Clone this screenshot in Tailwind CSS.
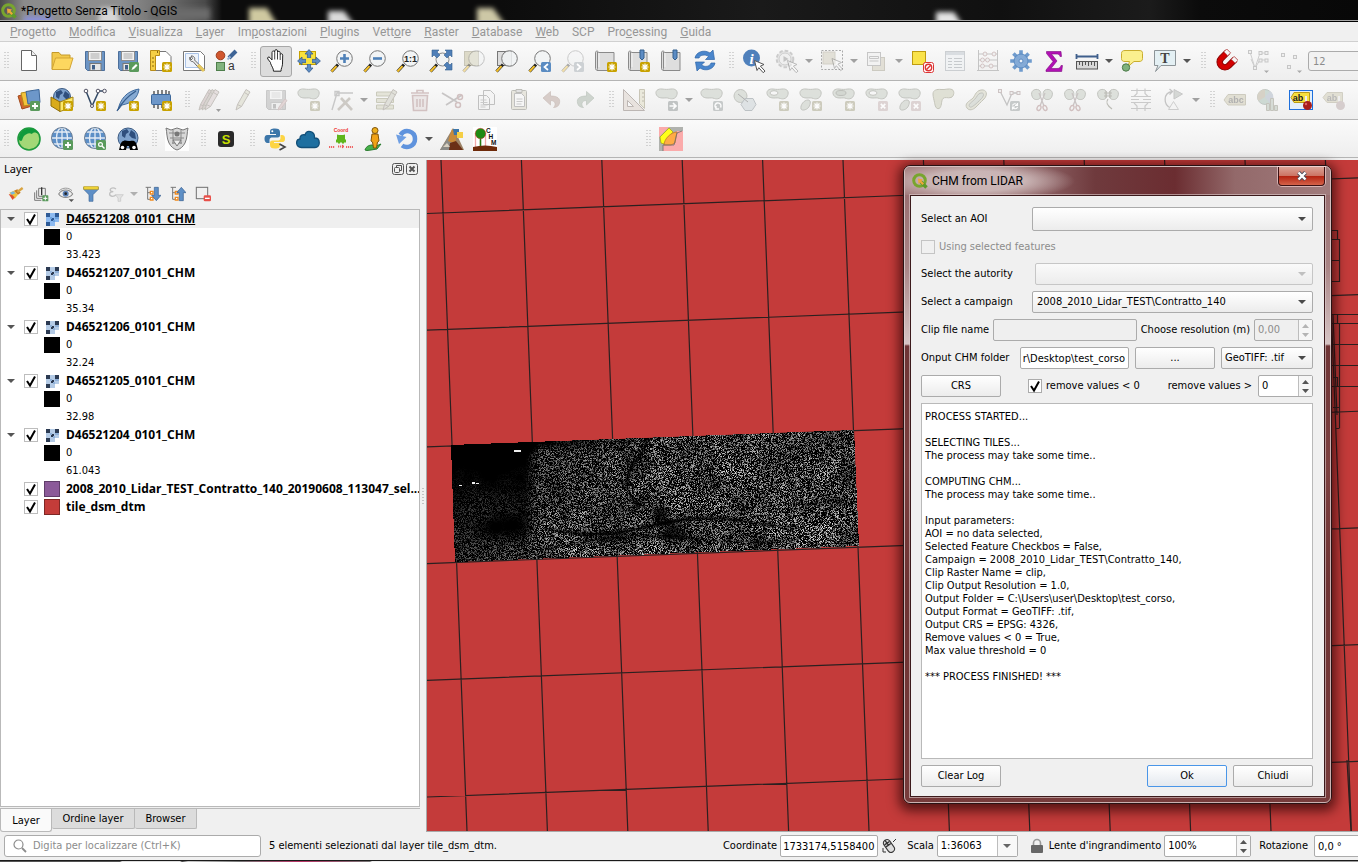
<!DOCTYPE html>
<html lang="it">
<head>
<meta charset="utf-8">
<title>*Progetto Senza Titolo - QGIS</title>
<script src="https://cdn.jsdelivr.net/npm/@tailwindcss/browser@4"></script>
</head>
<body class="h-screen flex flex-col overflow-hidden bg-[#f0f0f0] text-[11px] leading-[14px] text-black font-['DejaVu_Sans_Condensed','DejaVu_Sans',sans-serif]">

<!-- Window title -->
<header class="relative h-[22px] shrink-0 overflow-hidden bg-[linear-gradient(90deg,#4a4a4a_0px,#8b8b8b_24px,#8f8f8f_120px,#6e6e6e_165px,#4a4a4a_205px,#0c0c0c_222px,#0c0c0c_500px,#1a1a1a_760px,#101010_1000px,#1b1b1b_1150px,#0b0b0b_1200px,#080808_1358px)] border-b border-black">
  <svg class="absolute inset-0 w-full h-full" aria-hidden="true">
    <defs><filter id="soft" x="-50" y="-30" width="1500" height="90" filterUnits="userSpaceOnUse"><feGaussianBlur stdDeviation="2.500"/></filter></defs>
    <g filter="url(#soft)">
      <path d="M24 16h28v10H24z" fill="#8a90d8"/><path d="M100 8h16l6 18H98z" fill="#d6d6d6"/>
      <path d="M150 8h60v12h-60z" fill="#6a6a6a"/>
      <path d="M249 8h18l11 18h-29z" fill="#cfc9a0"/><path d="M328 11h16l11 15h-27z" fill="#dadada"/>
      <path d="M477 8h16l13 18h-29z" fill="#cdc8a6"/><path d="M936 12h18l9 14h-27z" fill="#e4e4e4"/>
    </g>
    <path d="M0 20.500h4000" stroke="#a8a8a8"/>
  </svg>
  <div class="relative flex items-center h-[21px] gap-1 pl-px">
    <svg class="w-4 h-4" viewBox="0 0 16 16" aria-hidden="true"><circle cx="7.500" cy="7.500" r="5.800" fill="none" stroke="#78a52e" stroke-width="3"/><path d="M8 8l6.500 6.500" stroke="#5f9a2a" stroke-width="3.500"/><path d="M6 5.500l5 1-1.500 1.500 2.500 2.500-1.500 1.500L8 9.500 6.500 11z" fill="#f0a63a"/></svg>
    <h1 class="font-['Roboto',sans-serif] text-xs text-black">*Progetto Senza Titolo - QGIS</h1>
  </div>
</header>

<!-- Menu bar -->
<nav id="menus" aria-label="Menu" class="flex items-center shrink-0 h-5 pl-[10px] gap-[13px] bg-[#f0f0f0] border-b border-[#d0d0d0] font-['Roboto',sans-serif] text-xs text-[#969696]">
  <button type="button"><u>P</u>rogetto</button><button type="button"><u>M</u>odifica</button><button type="button"><u>V</u>isualizza</button><button type="button"><u>L</u>ayer</button><button type="button">Im<u>p</u>ostazioni</button><button type="button"><u>P</u>lugins</button><button type="button">Vett<u>o</u>re</button><button type="button"><u>R</u>aster</button><button type="button"><u>D</u>atabase</button><button type="button"><u>W</u>eb</button><button type="button">SCP</button><button type="button">Pro<u>c</u>essing</button><button type="button"><u>G</u>uida</button>
</nav>

<!-- Tool bars, filled by the script -->
<div id="bar1" role="toolbar" aria-label="Progetto e navigazione" class="flex items-center shrink-0 h-[39px] overflow-hidden bg-linear-to-b from-[#fafafa] to-[#eeeeee] border-b border-[#b4b4b4]"></div>
<div id="bar2" role="toolbar" aria-label="Modifica" class="flex items-center shrink-0 h-[39px] overflow-hidden bg-linear-to-b from-[#fafafa] to-[#eeeeee] border-b border-[#b4b4b4]"></div>
<div id="bar3" role="toolbar" aria-label="Plugins" class="flex items-center shrink-0 h-[38px] overflow-hidden bg-linear-to-b from-[#fafafa] to-[#eeeeee] border-b border-[#b4b4b4]"></div>

<main class="relative flex flex-1 min-h-0 pt-[2px]">
  <!-- Layer dock -->
  <section class="flex flex-col w-[420px] shrink-0" aria-label="Layer">
    <div class="flex items-center h-[18px] pl-1 pr-[2px] gap-[2px] font-['Noto_Sans',sans-serif]">
      <h2 class="flex-1">Layer</h2>
      <button type="button" aria-label="Stacca"><svg class="w-3 h-3" viewBox="0 0 12 12" fill="none" stroke="#555"><rect x=".5" y=".5" width="11" height="11" rx="2"/><path d="M4.500 4.500v-2h5v5h-2"/><rect x="2.500" y="4.500" width="5" height="5" rx="1"/></svg></button>
      <button type="button" aria-label="Chiudi"><svg class="w-3 h-3" viewBox="0 0 12 12" fill="none" stroke="#555"><rect x=".5" y=".5" width="11" height="11" rx="2"/><path d="M3.500 3.500l5 5M8.500 3.500l-5 5" stroke-width="2"/></svg></button>
    </div>
    <div id="layerbar" role="toolbar" aria-label="Strumenti layer" class="flex items-center h-[31px] pl-[3px]"></div>
    <ul id="tree" class="flex-1 min-h-0 overflow-hidden bg-white border border-[#b9b9b9]"></ul>
    <div class="flex items-start h-6 mt-px border-t border-[#b9b9b9]" role="tablist">
      <button type="button" role="tab" aria-selected="true" class="h-[23px] w-[52px] pt-px bg-[#fafafa] border border-t-0 border-[#b9b9b9] rounded-b-[3px]">Layer</button>
      <button type="button" role="tab" class="h-5 w-[83px] bg-[#dcdcdc] border border-t-0 border-l-0 border-[#b9b9b9] rounded-b-[2px]">Ordine layer</button>
      <button type="button" role="tab" class="h-5 w-[62px] bg-[#dcdcdc] border border-t-0 border-l-0 border-[#b9b9b9] rounded-b-[2px]">Browser</button>
    </div>
  </section>

  <div class="w-[6px] shrink-0 flex items-center justify-center" role="separator"><svg class="w-[2px] h-4" viewBox="0 0 2 16" aria-hidden="true"><path d="M1 0v16" stroke="#b4b4b4" stroke-width="1.500" stroke-dasharray="1 2"/></svg></div>

  <!-- Map canvas -->
  <section class="relative flex-1 min-w-0 overflow-hidden bg-[#c43b3a] border-l border-b border-[#a9a9a9]" aria-label="Mappa">
    <svg id="grid" class="absolute inset-0 w-full h-full" fill="none" stroke="#2b2020" stroke-width="1.200" aria-hidden="true"></svg>
    <canvas id="chm" width="412" height="136" class="absolute left-[22px] top-[269px]"></canvas>
  </section>

  <!-- CHM from LIDAR dialog -->
  <form onsubmit="return false" aria-labelledby="dlgTitle" class="absolute right-[26px] top-[7px] w-[429px] rounded-[7px] border border-[#2a1214] shadow-[0_3px_12px_4px_rgba(30,0,0,0.65)] bg-[linear-gradient(180deg,#a88384_0px,#9a7072_30px,#a98485_100px,#d6c4c4_178px,#6e3435_180px,#7c4040_300px,#6e3333_420px,#773b3b_637px)]">
    <div class="rounded-[6px] border border-[#e0cfcf]/80 px-[5px] pb-[5px]">
      <div class="-mx-[5px] flex h-[28px] pl-[7px] rounded-t-[5px] bg-[radial-gradient(ellipse_100px_20px_at_70px_14px,#cdb9b9_0%,#c9b4b4_50%,transparent_100%),linear-gradient(90deg,#a07879_0px,#a07879_90px,#85575a_150px,#6f3a3d_190px,#6b2d31_270px,#93696a_330px,#a07b7c_420px)]">
        <div class="flex items-center gap-1">
          <svg class="w-4 h-4" viewBox="0 0 16 16" aria-hidden="true"><circle cx="7.500" cy="7.500" r="5.800" fill="none" stroke="#78a52e" stroke-width="3"/><path d="M8 8l6.500 6.500" stroke="#5f9a2a" stroke-width="3.500"/><path d="M6 5.500l5 1-1.500 1.500 2.500 2.500-1.500 1.500L8 9.500 6.500 11z" fill="#f0a63a"/></svg>
          <h2 id="dlgTitle" class="font-['Roboto',sans-serif] text-xs">CHM from LIDAR</h2>
        </div>
        <button type="button" aria-label="Chiudi finestra" class="ml-auto mr-[5px] w-[47px] h-[19px] grid place-items-center rounded-b-[4px] border border-t-0 border-[#3b1113] shadow-[0_0_0_1px_rgba(255,220,220,0.6)] bg-[linear-gradient(180deg,#dba296_0%,#cc7464_48%,#b3210f_50%,#d5634a_100%)]">
          <svg class="w-3 h-3" viewBox="0 0 12 12"><path d="M2.500 2.500l7 7M9.500 2.500l-7 7" stroke="#4a4a5a" stroke-width="4"/><path d="M2.500 2.500l7 7M9.500 2.500l-7 7" stroke="#fff" stroke-width="2.400"/></svg>
        </button>
      </div>
      <div class="border border-[#3c1a1c] outline outline-[#e0cfcf]/60 bg-[#f0f0f0] flex flex-col gap-[6px] pl-[10px] pr-[11px] pt-[11px] pb-[9px]">
        <div class="flex items-center">
          <label for="aoi" class="w-[111px]">Select an AOI</label>
          <span class="combo relative flex-1"><select id="aoi" class="appearance-none block w-full h-6 px-1 rounded-[2px] border border-[#ababab] bg-linear-to-b from-white to-[#ececec]"><option></option></select></span>
        </div>
        <div class="flex items-center h-5 gap-1 text-[#8c8c8c]">
          <input id="sel" type="checkbox" disabled class="appearance-none w-[14px] h-[14px] border border-[#c4c4c4] bg-[#f0f0f0]"><label for="sel">Using selected features</label>
        </div>
        <div class="flex items-center">
          <label for="aut" class="w-[114px]">Select the autority</label>
          <span class="combo relative flex-1 text-[#a9a9a9]"><select id="aut" disabled class="appearance-none block w-full h-[22px] px-1 rounded-[2px] border border-[#c6c6c6] bg-linear-to-b from-[#fafafa] to-[#ececec]"><option></option></select></span>
        </div>
        <div class="flex items-center">
          <label for="camp" class="w-[111px]">Select a campaign</label>
          <span class="combo relative flex-1"><select id="camp" class="appearance-none block w-full h-[22px] px-1 rounded-[2px] border border-[#ababab] bg-linear-to-b from-white to-[#ececec]"><option>2008_2010_Lidar_TEST\Contratto_140</option></select></span>
        </div>
        <div class="flex items-center gap-1">
          <label for="clip">Clip file name</label>
          <input id="clip" type="text" class="flex-1 min-w-0 h-[22px] px-1 rounded-[2px] border border-[#ababab] bg-[#efefef]">
          <label for="res">Choose resolution (m)</label>
          <span class="flex w-[59px] h-[22px] rounded-[2px] border border-[#ababab] bg-[#efefef]"><input id="res" type="text" value="0,00" disabled class="flex-1 min-w-0 px-[3px] text-[#8c8c8c]"><span class="spin spinoff w-[14px] border-l border-[#bdbdbd] bg-[#f6f6f6] text-[#b4b4b4]"></span></span>
        </div>
        <div class="flex items-center gap-[6px]">
          <label for="out" class="flex-1">Onput CHM folder</label>
          <input id="out" type="text" value="r\Desktop\test_corso" class="w-[109px] h-[22px] pr-[3px] text-right rounded-[2px] border border-[#ababab] bg-white">
          <button type="button" class="w-20 h-[22px] rounded-[2px] border border-[#ababab] bg-linear-to-b from-white to-[#ececec]">...</button>
          <span class="combo relative w-[92px]"><select aria-label="Formato" class="appearance-none block w-full h-[22px] px-[3px] rounded-[2px] border border-[#ababab] bg-linear-to-b from-white to-[#ececec]"><option>GeoTIFF: .tif</option></select></span>
        </div>
        <div class="flex items-center">
          <button type="button" class="w-20 h-[22px] rounded-[2px] border border-[#ababab] bg-linear-to-b from-white to-[#ececec]">CRS</button>
          <span class="tick relative ml-[27px] w-[14px] h-[14px]"><input id="neg" type="checkbox" checked class="appearance-none block w-[14px] h-[14px] border border-[#ababab] bg-white"></span>
          <label for="neg" class="ml-1">remove values &lt; 0</label>
          <label for="max" class="ml-auto mr-[6px]">remove values &gt;</label>
          <span class="flex w-[55px] h-[22px] rounded-[2px] border border-[#ababab] bg-white"><input id="max" type="text" value="0" class="flex-1 min-w-0 px-[3px]"><span class="spin w-[14px] border-l border-[#bdbdbd] bg-[#f6f6f6] text-[#555]"></span></span>
        </div>
        <textarea readonly aria-label="Log" class="block w-full h-[356px] resize-none border border-[#b9b9b9] bg-white px-[3px] py-[6px] leading-[13px]">PROCESS STARTED...

SELECTING TILES...
The process may take some time..

COMPUTING CHM...
The process may take some time..

Input parameters:
AOI = no data selected,
Selected Feature Checkbos = False,
Campaign = 2008_2010_Lidar_TEST\Contratto_140,
Clip Raster Name = clip,
Clip Output Resolution = 1.0,
Output Folder = C:\Users\user\Desktop\test_corso,
Output Format = GeoTIFF: .tif,
Output CRS = EPSG: 4326,
Remove values &lt; 0 = True,
Max value threshold = 0

*** PROCESS FINISHED! ***</textarea>
        <div class="flex gap-[6px]">
          <button type="button" class="w-20 h-[22px] mr-auto rounded-[2px] border border-[#ababab] bg-linear-to-b from-white to-[#ececec]">Clear Log</button>
          <button type="submit" class="w-20 h-[22px] rounded-[2px] border border-[#4a96e8] bg-linear-to-b from-white to-[#e4e9ef]">Ok</button>
          <button type="button" class="w-20 h-[22px] rounded-[2px] border border-[#ababab] bg-linear-to-b from-white to-[#ececec]">Chiudi</button>
        </div>
      </div>
    </div>
  </form>
</main>

<!-- Status bar -->
<footer class="flex items-center shrink-0 h-7 pl-1 overflow-hidden whitespace-nowrap">
  <label class="flex items-center gap-[6px] w-[257px] h-[22px] pl-2 rounded-[3px] border border-[#ababab] bg-white shrink-0">
    <svg class="w-[14px] h-[14px] shrink-0" viewBox="0 0 14 14" fill="none" stroke="#8c8c8c" stroke-width="1.200" aria-hidden="true"><circle cx="5.500" cy="5.500" r="4.500"/><path d="M9 9l4 4" stroke-width="1.800"/></svg>
    <input type="search" aria-label="Localizza" placeholder="Digita per localizzare (Ctrl+K)" class="flex-1 min-w-0 placeholder:text-[#8c8c8c]">
  </label>
  <p class="ml-2 mr-auto">5 elementi selezionati dal layer tile_dsm_dtm.</p>
  <div class="flex items-center -mr-6">
    <label for="coord">Coordinate</label>
    <input id="coord" type="text" value="1733174,5158400" class="ml-[3px] w-[98px] h-[22px] px-[2px] rounded-[2px] border border-[#ababab] bg-white">
    <svg class="ml-[3px] w-4 h-4" viewBox="0 0 16 16" aria-hidden="true"><g transform="rotate(-35 8 8)"><rect x="4.500" y="1" width="7" height="14" rx="3.500" fill="#ddd" stroke="#333"/><path d="M5 4.500h6M5 7h6M8 1v6" stroke="#333" stroke-width="1.300"/></g><path d="M12 4l3-3M2 10v4h3" stroke="#333" fill="none"/></svg>
    <label for="scale" class="ml-[10px]">Scala</label>
    <span class="ml-[3px] flex w-[81px] h-[22px] rounded-[2px] border border-[#ababab] bg-white"><input id="scale" type="text" value="1:36063" class="flex-1 min-w-0 px-[3px]"><button type="button" aria-label="Apri scale" class="w-5 border-l border-[#bdbdbd] bg-[#f8f8f8] grid place-items-center"><svg class="w-2 h-1" viewBox="0 0 8 4"><path d="M0 0h8L4 4z" fill="#666"/></svg></button></span>
    <svg class="ml-3 w-[14px] h-4" viewBox="0 0 14 16" aria-hidden="true"><path d="M3.500 8V5a3.500 3.500 0 0 1 7 0v3" fill="none" stroke="#999" stroke-width="1.600"/><rect x="1" y="7" width="12" height="8" rx="1" fill="#666"/></svg>
    <label for="lens" class="ml-[5px]">Lente d'ingrandimento</label>
    <span class="ml-[3px] flex w-[87px] h-[22px] rounded-[2px] border border-[#ababab] bg-white"><input id="lens" type="text" value="100%" class="flex-1 min-w-0 px-[3px]"><span class="spin w-[14px] border-l border-[#bdbdbd] bg-[#f6f6f6] text-[#555]"></span></span>
    <label for="rot" class="ml-2">Rotazione</label>
    <input id="rot" type="text" value="0,0 °" class="ml-[6px] w-[68px] h-[22px] px-[3px] rounded-[2px] border border-[#ababab] bg-white">
  </div>
</footer>
<div class="h-[2px] shrink-0 border-t border-[#1a1a1a] bg-[linear-gradient(90deg,#555_0px,#555_120px,#ddd_122px,#ddd_180px,#444_182px,#ccc_188px,#777_240px,#b36_300px,#777_370px,#eee_372px,#999_100%)]"></div>

<script>
// ---- small pieces shared by several icons (24 x 24 box) ----
const badge = (fill, inner) => `<rect x="13" y="13" width="10" height="10" rx="1.500" fill="${fill}"/>${inner}`;
const star = badge('#c8a200', '<path d="M18 14.500v7M14.500 18h7M15.500 15.500l5 5M20.500 15.500l-5 5" stroke="#fff" stroke-width="1.200"/>');
const starOff = badge('#c4c2b0', '<path d="M18 14.500v7M14.500 18h7M15.500 15.500l5 5M20.500 15.500l-5 5" stroke="#fff" stroke-width="1.200"/>');
const plus = badge('#5a9a5c', '<path d="M18 15v6M15 18h6" stroke="#fff" stroke-width="1.800"/>');
const crossOff = badge('#d8cccc', '<path d="M15.800 15.800l4.500 4.500M20.300 15.800l-4.500 4.500" stroke="#fff" stroke-width="1.700"/>');
const lens = (o = 1) => `<g opacity="${o}"><path d="M1.500 22.500l6.500-7" stroke="#222" stroke-width="3"/><path d="M1.500 22.500l5-5.400" stroke="#f5c02a" stroke-width="2"/><circle cx="14.500" cy="9.500" r="7.800" fill="#f1f3f4" fill-opacity=".85" stroke="#777"/></g>`;
const cursor = (x, y, o = 1) => `<path transform="translate(${x} ${y})" d="M0 0l9.500 4-3.600 1.600 4.600 5-1.800 1.600-4.400-5L2.500 10z" fill="#fff" stroke="#555" opacity="${o}"/>`;
const blob = 'M1.500 7c-2-4 1.500-6.500 5.500-6s5 .5 9 0 7 1.500 6 5.500-4.500 5-7.500 4-3.500-.5-6.500-.5S3 9.500 1.500 7z';
const blobOff = `<path d="${blob}" fill="#d7dbd5" stroke="#b6b8b2"/>`;
const globe = '<circle cx="12" cy="11" r="10.500" fill="#5c8fc7"/><g fill="none" stroke="#e4ecf5" stroke-width="1.300"><path d="M12 .5v21M1.500 11h21M3.500 5h17M3.500 17h17"/><ellipse cx="12" cy="11" rx="5.500" ry="10.500"/></g><circle cx="12" cy="11" r="10.500" fill="none" stroke="#6b7f96"/>';
const darkGlobe = '<circle cx="12" cy="9" r="8.500" fill="#7ea2cc" stroke="#3b5a82"/><path d="M6 4l5-2 2 3-3 2-1 4-3-2zM15 3l4 3 1 6-4-1-3-3zM8 13l5 1-1 3-3-1z" fill="#2f4f7d"/>';
const leavesOff = '<path d="M2 8C0 3 5 0 9 2c3 2 2 8 0 9s-6 1-7-3z" fill="#d7dbd5" stroke="#b6b8b2"/><path d="M22 8c2-5-3-8-7-6-3 2-2 8 0 9s6 1 7-3z" fill="#d7dbd5" stroke="#b6b8b2"/>';
const scissorOff = '<path d="M9 5l5 13M15 5l-5 13" stroke="#bfb8b8" stroke-width="1.300"/><ellipse cx="9" cy="20" rx="1.800" ry="2.600" transform="rotate(25 9 20)" fill="none" stroke="#c9b4b4" stroke-width="1.400"/><ellipse cx="15" cy="20" rx="1.800" ry="2.600" transform="rotate(-25 15 20)" fill="none" stroke="#c9b4b4" stroke-width="1.400"/>';
const roll = '<path d="M3.500 3v16.500c0 2-2 2-2 0V4c0-3 3-2 3-.500h15.500v18H3" fill="#dedede" stroke="#8a8a8a"/><path d="M5 4v14" stroke="#f4f4f4"/>';
const pen = (x, f = '#dcdcd4') => `<g transform="translate(${x} 0)"><path d="M3 22l1.500-5.500L13 1.500l4 2.500-8.500 14.500z" fill="${f}" stroke="#b8b4ae"/><path d="M4.500 16.500l4 2M11.500 4.500l4 2.500" stroke="#b8b4ae"/></g>`;
const floppy = '<path d="M2.500 2.500h19v19h-17l-2-2z" fill="#6b94c4" stroke="#4c6f9b"/><rect x="5.500" y="2.500" width="13" height="9" fill="#f2f2f2" stroke="#8c8c8c"/><path d="M7.500 5h9M7.500 7h9M7.500 9h9" stroke="#aaa"/><rect x="7" y="14.500" width="11" height="7" fill="#e6e6e6" stroke="#777"/><rect x="9" y="16" width="3" height="4.500" fill="#3f5f88"/>';

const icons = {
  new: '<path d="M4.500 1.500h10l5 5v15h-15z" fill="#fff" stroke="#666"/><path d="M14.500 1.500v5h5" fill="#eee" stroke="#666"/>',
  open: '<path d="M2 20V3.500h7l2 2.500h9v3" fill="#f2c94c" stroke="#c49a2a"/><path d="M2 20.500L5.500 9h17.500l-3.500 11.500z" fill="#fdd75f" stroke="#d3a534"/>',
  save: floppy,
  saveas: floppy + badge('#5a9a5c', '<path d="M15.500 21l1-2.500 3.500-3.500 1.500 1.500-3.500 3.500z" fill="#fff"/>'),
  layout: '<path d="M5 2.500h12l5 5v14H5z" fill="#fff" stroke="#777"/><path d="M1.500 1.500h9v5h-4v15h-5z" fill="#f6cf45" stroke="#b98c18"/><path d="M8.500 2v2M3 9h2M3 13h2M3 17h2" stroke="#8a6a10"/>' + star,
  layoutmgr: '<path d="M1.500 2.500h17l4 4v15h-21z" fill="#fff" stroke="#777"/><path d="M3.500 4.500h13v14h-13z" fill="#eef3fa" stroke="#a9c2e6"/><path d="M8 8c-1 3 1 5 3 4.500l8 9 2-2-8.500-8.500c1-2-1-4.500-3.500-4l1.500 2.500-1.500 1.500z" fill="#eee" stroke="#666"/><path d="M16 16l6 6" stroke="#e8c95c" stroke-width="3"/>',
  style: '<circle cx="5.500" cy="6.500" r="4.300" fill="#d0572f" stroke="#9c3d1c"/><path d="M14 9l7-7" stroke="#3e6496" stroke-width="4"/><path d="M12.500 10.500l3-3" stroke="#9cb6d6" stroke-width="2"/><rect x="1.500" y="13.500" width="8" height="8" fill="#82b37e" stroke="#4e7e4b"/><text x="13" y="21" font-size="12" font-family="Liberation Sans, sans-serif" fill="#333">a</text>',
  pan: '<path d="M6.500 13.500L3.800 10c-1-1.600 1-2.800 2.200-1.400l2 2.400V3.500c0-2 2.600-2 2.700 0V2c.200-1.900 2.700-1.900 2.800 0v1.500c.200-1.700 2.500-1.600 2.700.200v2c.4-1.500 2.400-1.300 2.500.5l-.2 9c-.2 3-1.500 4-1.500 7H9.500c0-3-2-5-3-8z" fill="#fff" stroke="#222"/><path d="M10.700 4v6.500M13.500 4v6.500M16.200 6v5" stroke="#444"/>',
  panto: '<rect x="2.500" y="2.500" width="16" height="13" fill="#f9e23c" stroke="#c8a200"/><g fill="#5c8cc4" stroke="#3a6090" stroke-width=".8"><path d="M12 .6l4 4.400h-2.400v4h-3.200V5H8zM12 23.400L8 19h2.400v-4h3.200v4H16zM.6 12L5 8v2.400h4v3.200H5V16zM23.400 12L19 16v-2.400h-4v-3.200h4V8z"/></g><rect x="9" y="9" width="6" height="6" fill="#f9e23c"/>',
  zin: lens() + '<path d="M14.500 5v9M10 9.500h9" stroke="#4f81b8" stroke-width="2.600"/>',
  zout: lens() + '<path d="M10 9.500h9" stroke="#4f81b8" stroke-width="2.600"/>',
  z11: lens() + '<text x="14.500" y="13" text-anchor="middle" font-size="9" font-weight="bold" font-family="Liberation Sans, sans-serif" fill="#222">1:1</text>',
  zfull: '<path d="M1.500 22.500l6.500-7" stroke="#222" stroke-width="3"/><path d="M1.500 22.500l5-5.400" stroke="#f5c02a" stroke-width="2"/><circle cx="13.500" cy="10.500" r="6.500" fill="#f1f3f4" fill-opacity=".9" stroke="#888"/><g fill="#4f7fb8" stroke="#34608f" stroke-width=".6"><path d="M3 1h7L8 3l3 3-3 3-3-3-2 2zM23 1v7l-2-2-3 3-3-3 3-3-2-2zM23 21h-7l2-2-3-3 3-3 3 3 2-2z"/></g>',
  zsel: '<rect x="2.500" y="2.500" width="14" height="14" fill="#dddac8" stroke="#c8c6b8"/>' + lens(.4),
  zlayer: '<rect x="2.500" y="2.500" width="14" height="14" fill="#ddd" stroke="#777"/>' + lens(),
  zlast: lens() + badge('#5b8cc2', '<path d="M20 15l-3.500 3 3.500 3" fill="none" stroke="#fff" stroke-width="1.700"/>'),
  znext: lens(.35) + badge('#cdd1d4', '<path d="M16 15l3.500 3-3.500 3" fill="none" stroke="#fff" stroke-width="1.700"/>'),
  bk1: roll + star,
  bk2: roll + '<path d="M13 1h4v8l-2 2-2-2z" fill="#5c8cc4" stroke="#34608f"/>' + star,
  bk3: roll + '<path d="M13 1h4v8l-2 2-2-2z" fill="#5c8cc4" stroke="#34608f"/>',
  refresh: '<path d="M2 9c1-6 9-9 15-5l3-3 1.500 9.500h-9l3-3C12 5 7 6 6 9z" fill="#4a86cc" stroke="#2f66a8" stroke-width=".7"/><path d="M22 14c-1 6-9 9-15 5l-3 3-1.500-9h9l-3 3c3.500 2.500 8.500 1.500 9.500-2z" fill="#4a86cc" stroke="#2f66a8" stroke-width=".7"/>',
  info: '<circle cx="9.500" cy="9" r="8.500" fill="#4f80bb"/><text x="9.500" y="14.500" text-anchor="middle" font-size="15" font-style="italic" font-weight="bold" font-family="Liberation Serif, serif" fill="#fff">i</text>' + cursor(12.5, 11.5),
  action: '<circle cx="10" cy="10" r="8.300" fill="#e3e3e3" stroke="#c2c2c2" stroke-width="2" stroke-dasharray="3.500 2"/><circle cx="10" cy="10" r="6" fill="#eee" stroke="#c4c4c4"/><path d="M8.500 7l5 3-5 3z" fill="#b8b8b8"/>' + cursor(12.5, 11.5, .45),
  select: '<rect x="1.500" y="1.500" width="21" height="19" fill="none" stroke="#999" stroke-dasharray="2 1.500"/><rect x="3" y="3" width="12" height="12" fill="#dedbd0" stroke="#c9c6bc"/>' + cursor(12, 9.5, .45),
  form: '<rect x="7.500" y="8.500" width="12" height="13" fill="#dedbd0" stroke="#c4c1b6"/><rect x="2.500" y="3.500" width="13" height="13" fill="#f2f2f2" stroke="#bbb"/><path d="M4.500 7.500h9v2h-9zM4.500 12h9" stroke="#bbb" fill="none"/>',
  desel: '<rect x="2.500" y="2.500" width="13" height="13" fill="#fae34a" stroke="#bf9c10"/><rect x="13.500" y="13.500" width="10" height="10" rx="2" fill="#fff" stroke="#d33"/><circle cx="18.500" cy="18.500" r="3.200" fill="none" stroke="#d33" stroke-width="1.400"/><path d="M16.500 20.500l4-4" stroke="#d33" stroke-width="1.400"/>',
  table: '<rect x="2.500" y="2.500" width="19" height="19" fill="#f0f2f4" stroke="#c2c6ca"/><path d="M3 4.500h18" stroke="#d3d7dc" stroke-width="3"/><path d="M5 9.500h4M11 9.500h8M5 12.500h4M11 12.500h8M5 15.500h4M11 15.500h8M5 18.500h4M11 18.500h8" stroke="#bcc0c4"/>',
  abacus: '<path d="M2.500 1v20M21.500 1v20M1 21.500h22M2.500 5h19M2.500 11h19M2.500 17h19" stroke="#b9b9b9" fill="none"/><g fill="#eee" stroke="#c9b6b6"><circle cx="9" cy="5" r="2"/><circle cx="18" cy="5" r="2"/><circle cx="6.500" cy="11" r="2"/><circle cx="11.500" cy="11" r="2"/><circle cx="6.500" cy="17" r="2"/><circle cx="15" cy="17" r="2"/></g>',
  gear: '<g stroke="#6f9bcd" stroke-width="3.600"><path d="M12 1.200v21.600M1.200 12h21.600M4.400 4.400l15.200 15.200M19.600 4.400L4.400 19.600"/></g><circle cx="12" cy="12" r="7" fill="#84aad6" stroke="#5a8ac2"/><circle cx="12" cy="12" r="2" fill="#eef3f9" stroke="#5a8ac2"/>',
  sigma: '<path d="M4.500 2.500h14.500l.5 5h-1.500c-.5-2-1.500-2.500-4-2.500H9.500l5.500 7-6 7.500h6c2.500 0 3.500-1 4-3h1.500l-.8 6H4v-1.500l7-8.500-6.500-8z" fill="#b111b4" stroke="#7d0c80" stroke-width=".6"/>',
  measure: '<path d="M1.500 5v5M22.500 5v5M2 7.500h20" stroke="#3f5f8c" stroke-width="1.800"/><rect x="1.500" y="12.500" width="21" height="7.500" fill="#d8d8d8" stroke="#555"/><path d="M4.500 13v3M7.500 13v4M10.500 13v3M13.500 13v4M16.500 13v3M19.500 13v4" stroke="#555"/>',
  annot: '<path d="M5 1.500h14c3 0 3.500 1 3.500 3v5c0 2-1 3-3.500 3h-5l-6 5 1.500-5H5c-2.500 0-3.500-1-3.500-3v-5c0-2 1-3 3.500-3z" fill="#fbf08e" stroke="#c9ad2e"/><circle cx="6" cy="18.500" r="3.700" fill="#7fb27c" stroke="#4c7a49"/>',
  text: '<path d="M1.500 1.500h21v15H8l-5.500 6L5 16.500H1.500z" fill="#e4f0f4" stroke="#8c9498"/><text x="12" y="14" text-anchor="middle" font-size="14" font-weight="bold" font-family="Liberation Serif, serif" fill="#444">T</text>',
  magnet: '<g transform="rotate(45 12 12)"><path d="M4 5h5.500v8.500a2.500 2.500 0 0 0 5 0V5H20v8.500a8 8 0 0 1-16 0z" fill="#d40000" stroke="#8c0000"/><path d="M4 3h5.500v4H4zM14.500 3H20v4h-5.500z" fill="#f6f6f6" stroke="#b55" stroke-width=".9"/></g>',
  node: '<path d="M3 3l5 16L13 4h6M8 19l5-8h7M4 10l4 9" fill="none" stroke="#c4c4c4"/><g fill="#eee" stroke="#bcbcbc"><rect x="1.500" y="1.500" width="3" height="3"/><rect x="12" y="2.500" width="3" height="3"/><rect x="18" y="2.500" width="3" height="3"/><rect x="6.500" y="17.500" width="3" height="3"/><rect x="12" y="10" width="3" height="3"/><rect x="18" y="10" width="3" height="3"/></g><path d="M17 21.500h5l-2.500 2.500z" fill="#999"/>',
  dots: '<g fill="#eee" stroke="#bcbcbc"><rect x="1.500" y="4.500" width="3" height="3"/><rect x="13.500" y="6.500" width="3" height="3"/><rect x="7.500" y="16.500" width="3" height="3"/></g><path d="M17 21.500h5l-2.500 2.500z" fill="#999"/>',
  // layer creation and editing
  addlayer: '<path d="M1 8l10-3 4 13-10 3z" fill="#d2662d" stroke="#a24a1c"/><path d="M4 5l11-2 3 13-11 2z" fill="#f3c33b" stroke="#b78a17"/><path d="M9 3.500l13-2 1 13-12 1.500z" fill="#6d97c9" stroke="#3d6799"/>' + plus,
  geopkg: darkGlobe + '<path d="M1 9l9 5v9.500L1 18z" fill="#d9ab1a" stroke="#8d6c08"/><path d="M10 14l13-5v10l-13 4.500z" fill="#fbe96a" stroke="#a58415"/>' + star,
  shape: '<path d="M3 3l6 15L16 3h6" fill="none" stroke="#334a66" stroke-width="1.500"/><g fill="#fff" stroke="#556"><circle cx="3" cy="3" r="1.800"/><circle cx="15" cy="3" r="1.800"/><circle cx="21.500" cy="3" r="1.800"/><circle cx="9" cy="18" r="1.500"/></g>' + star,
  feather: '<path d="M2 22C4 12 10 3 23 1c-1 8-6 14-17 16z" fill="#86aad3" stroke="#3f6a9d"/><path d="M1 23C6 14 12 8 20 3" fill="none" stroke="#345c8c" stroke-width="1.300"/>' + star,
  chip: '<path d="M5 3v5M9 2v5M13 2v5M17 2v5M20 3v5M5 15v5M9 15v6M13 15v5" stroke="#444" stroke-width="1.300"/><rect x="2.500" y="6.500" width="19" height="10" rx="1" fill="#6d97c9" stroke="#3d6799"/>' + star,
  pens: pen(-2, '#d8cccc') + pen(1, '#d2cdc8') + pen(4, '#e2dada') + '<path d="M18 21h5l-2.500 3z" fill="#888"/>',
  pen1: pen(2, '#e2e2d6'),
  saveedit: '<g opacity=".4" style="filter:grayscale(1)">' + floppy + '</g><path d="M14 22l1-3 6-8 2 1.500-6 8z" fill="#decfcf" stroke="#cbb"/>',
  blobnew: blobOff + starOff,
  vertex: '<path d="M2 22L7 5h16M5 3.500h4v4H5z" fill="none" stroke="#bdbdbd" stroke-width="1.400"/><path d="M11 10l11 12M20 10L8 22" stroke="#c4c0ba" stroke-width="2.600"/>',
  multi: '<path d="M1.500 4h17v4h-17zM1.500 10.500h17v4h-17zM1.500 17h17v4h-17z" fill="#e0e0d2" stroke="#c0c0ae"/>' + pen(5),
  trash: '<path d="M4.500 7.500h15l-1 15h-13z" fill="#eae4e4" stroke="#cbb6b6" stroke-width="1.600"/><path d="M3 5h18M9 5V2.500h6V5M9 11v8M12 11v8M15 11v8" fill="none" stroke="#cbb6b6" stroke-width="1.600"/>',
  cut: '<path d="M1 5l15 9M5 17L21 7" stroke="#bdbaba" stroke-width="1.800"/><circle cx="19" cy="9" r="2.500" fill="none" stroke="#c9b4b4" stroke-width="1.500"/><circle cx="17" cy="17" r="2.500" fill="none" stroke="#c9b4b4" stroke-width="1.500"/>',
  copy: '<path d="M9.500 2.500h7l4 4v10h-11zM4.500 7.500h8l3 3v11h-11z" fill="#f4f4f4" stroke="#b4b4b4"/><path d="M6.500 12h6M6.500 14.500h7M6.500 17h7M6.500 19h5" stroke="#c0c0c0"/>',
  paste: '<rect x="4.500" y="2.500" width="15" height="19" rx="1" fill="#e4e2d8" stroke="#b0b0aa"/><path d="M7.500 5.500h7l3 3v10h-10z" fill="#f7f7f7" stroke="#b4b4b4"/><path d="M9 1.500h6v3H9z" fill="#ddd" stroke="#b0b0aa"/><path d="M9.500 11h6M9.500 13.500h6M9.500 16h5" stroke="#c0c0c0"/>',
  undo: '<path d="M3 10l7.500-6.500V8c7 0 10 2.500 9 7-.5 3-3 4.500-6 4.500 2.500-2 2.500-7-3-7V17z" fill="#d0c3be" stroke="#c0b1ac" stroke-width=".7"/>',
  redo: '<path d="M21 10l-7.500-6.500V8c-7 0-10 2.500-9 7 .5 3 3 4.500 6 4.500-2.500-2-2.500-7 3-7V17z" fill="#c5cdc5" stroke="#b2bab2" stroke-width=".7"/>',
  ruler: '<path d="M1.500 1.500l21 21h-21z" fill="#e6dfda" stroke="#b0a8a4"/><path d="M5.500 12.500l6 6h-6z" fill="#f8f8f8" stroke="#b0a8a4"/><path d="M17.500 1.500h5v19l-5-5z" fill="#e8e6d6" stroke="#bebaa8"/><path d="M20 5h2M20 9h2M20 13h2" stroke="#b0ac9c"/>',
  moveblob: blobOff + badge('#b4b8b8', '<path d="M14.500 18h6M18 15l3 3-3 3" fill="none" stroke="#fff" stroke-width="1.700"/>'),
  rotblob: blobOff + badge('#bcc0c0', '<path d="M16.500 20.500a3 3 0 1 1 4-1M16 18v3h3" fill="none" stroke="#fff" stroke-width="1.400"/>'),
  simpl: '<circle cx="7.500" cy="8" r="6.500" fill="#d7dbd5" stroke="#b6b8b2"/><path d="M12 10.500h8l3 6-4 6h-7l-4-6z" fill="#dadfe1" stroke="#b0b6ba"/><path d="M5 6l10 8" stroke="#a0a0a0"/>',
  ring: blobOff + '<ellipse cx="8" cy="5" rx="4" ry="2.300" fill="#f6f6f6" stroke="#b6b8b2"/>' + starOff,
  part: blobOff + '<path d="M2 21c-1-4 3-9 7-9s2 6 0 8-6 3-7 1z" fill="#d7dbd5" stroke="#b6b8b2"/>' + starOff,
  fillring: blobOff + '<ellipse cx="9" cy="5" rx="5" ry="2.500" fill="#cbd0c9" stroke="#b0b2ac"/>' + starOff,
  delring: blobOff + '<ellipse cx="8" cy="5" rx="4" ry="2.300" fill="#f6f6f6" stroke="#b6b8b2"/>' + crossOff,
  delpart: blobOff + '<path d="M2 21c-1-4 3-9 7-9s2 6 0 8-6 3-7 1z" fill="#d7dbd5" stroke="#b6b8b2"/>' + crossOff,
  reshape: '<path d="M2 6c0-4 4-5 8-4.500s8-1.500 11 0 2 7-1 8-6-1-8 1-1 9-4 10-4-3-4.500-6S2 9 2 6z" fill="#dadbcd" stroke="#b8b8aa"/>',
  offset: '<path d="M3 20c-3-4 2-7 5-9s3-8 9-9 7 5 3 9-5 5-8 8-7 4-9 1z" fill="#e0e0d4" stroke="#b8b8aa"/><path d="M5.500 18.500c-1.500-2.500 2-4 5-7s3-6 6.500-6.500 3 3 .5 5.500-5 5-7 6.500-4 3-5 1.500z" fill="#d7dbd5" stroke="#b6b8b2"/>',
  split1: '<path d="M3 3l7 14L15 5h7" fill="none" stroke="#b8b8b8" stroke-width="1.300"/><g fill="#eee" stroke="#c4b8b8"><rect x="1.500" y="1.500" width="3" height="3"/><rect x="13" y="3.500" width="3" height="3"/><rect x="20" y="3.500" width="3" height="3"/></g>' + badge('#bcc0c0', '<path d="M15.500 17.500c.5-2 3.500-2.500 4.500-.5M20.500 15v2.500H18M20.500 19c-.5 2-3.500 2.500-4.500.5M15.500 21.500V19H18" fill="none" stroke="#fff" stroke-width="1.100"/>'),
  split2: leavesOff + scissorOff,
  split3: leavesOff + scissorOff,
  merge: leavesOff + '<path d="M8 5h8M8 8h8M10 3v7M14 3v7M12 11c-3 4 0 7 4 10" fill="none" stroke="#b0b0a8" stroke-width="1.200"/>',
  align: '<path d="M2 2.500h20M2 8.500h20M2 14.500h20M2 20.500h20M8 .5v5l-3 3M16 .5v5l3 3M8 23v-5l-3-3M16 23v-5l3-3M2 11.500h8M14 11.500h8" fill="none" stroke="#c0c0c0" stroke-width="1.200"/>',
  rotsym: '<path d="M9 20C1 17 1 5 10 3.500M7.500 1l3 2.500-3 3" fill="none" stroke="#b8b8b8" stroke-width="1.300"/><path d="M12 1.500l8.500 4.500-8.500 5z" fill="#cdd0cd" stroke="#bbb"/><path d="M6.500 21.500l5-8 5 8z" fill="#f4f4f4" stroke="#c4c4c4"/>',
  lab: '<path d="M1 12l4-5.500h17.500v10.500H5z" fill="#dddacb" stroke="#c4c1b2"/><text x="13" y="15" text-anchor="middle" font-size="9" font-weight="bold" font-family="Liberation Sans, sans-serif" fill="#a0a0a0">abc</text>',
  diag: '<circle cx="9" cy="9" r="7.500" fill="#c4d3cc" stroke="#b5bdb8"/><path d="M9 9V1.500A7.500 7.500 0 0 0 2.500 13z" fill="#cfc9bb"/><path d="M9 9l5 6.500A7.500 7.500 0 0 0 14 3z" fill="#c6cdd6"/><path d="M10.500 15.500h3v7h-3zM14.500 10.500h3v12h-3zM18.500 17.500h3v5h-3z" fill="#cfd6cf" stroke="#b9b9b0"/>',
  pin: '<rect x=".5" y="2.500" width="23" height="19" fill="#e3effb" stroke="#1d6fdc"/><path d="M2 9.500l3-5h15.500v10H5z" fill="#f7df3e" stroke="#b89b18"/><text x="9" y="13" text-anchor="middle" font-size="9" font-weight="bold" font-family="Liberation Sans, sans-serif" fill="#222">ab</text><path d="M17 8v8" stroke="#eee" stroke-width="2"/><circle cx="18.500" cy="17.500" r="4.500" fill="#a81d1d"/><circle cx="17" cy="16" r="1.200" fill="#d66"/>',
  pinoff: '<path d="M1 9.500l4-5h15.500v10H5z" fill="#dddacb" stroke="#c9c6b8"/><text x="10" y="13" text-anchor="middle" font-size="9" font-weight="bold" font-family="Liberation Sans, sans-serif" fill="#aaa">ab</text><path d="M17 8v8" stroke="#eee" stroke-width="2"/><circle cx="18.500" cy="17.500" r="4.500" fill="#cfc4c4"/>',
  // plugins
  gball: '<circle cx="12" cy="12" r="11" fill="#a3d877" stroke="#1f9a3e" stroke-width="1.600"/><path d="M2 13C1 5 8 0 16 2c3 1 4 2 5 5-2-2-5-2-6 0-3-2-6 0-8 2-2 2-1 7-5 4z" fill="#119a3c"/>',
  wadd: globe + plus,
  wfind: globe + badge('#5a9a5c', '<circle cx="17.500" cy="17.500" r="1.900" fill="none" stroke="#fff" stroke-width="1.200"/><path d="M19 19l2.500 2.500" stroke="#fff" stroke-width="1.400"/>'),
  wbino: darkGlobe.replace('r="8.500"', 'r="10"').replace('cy="9"', 'cy="11"') + '<path d="M4 19c1-5 3-6 7-5h3c4-1 6 0 7 5l1 4h-8l-1-4h-2l-1 4H3z" fill="#000"/><circle cx="6.500" cy="20.500" r="1.800" fill="#fff"/><circle cx="18" cy="20.500" r="1.800" fill="#fff"/>',
  shield: '<rect width="24" height="24" fill="#fdfdfd"/><path d="M1 1l5 2 6-2 6 2 5-2c-1 4-.5 10-3 15-2 4-5 6-8 7-3-1-6-3-8-7C1.500 11 2 5 1 1z" fill="#d8d8d8" stroke="#777"/><path d="M4 6h16M5 11h14M7 16h10M8 3v14M16 3v14" stroke="#888" fill="none"/><circle cx="12" cy="7" r="2.500" fill="#777"/><path d="M8 13h8l-4 6z" fill="#eee" stroke="#777"/>',
  scp: '<rect x="4" y="4" width="16" height="16" rx="3" fill="#2a2a2a"/><text x="12" y="17" text-anchor="middle" font-size="13" font-weight="bold" font-family="Liberation Sans, sans-serif" fill="#c8e000">S</text>',
  python: '<path d="M12 1.500c-4 0-5 1-5 3.500V7h6v1H4.500C2 8 1.500 10 1.500 12s1 4 3 4h2v-3c0-2 1.500-2.500 3-2.500h5c2 0 2.500-1 2.500-2.500V5c0-2.500-1.500-3.500-5-3.500z" fill="#3c76a9"/><path d="M12 21.500c4 0 5-1 5-3.500v-2h-6v-1h8.500c2 0 2.500-1.500 2.500-3.500s-1-3.500-3-3.500h-1.500v3c0 2-1.500 2.500-3 2.500h-5c-2 0-2.500 1-2.500 2.500v2c0 2.500 1.500 3.500 5 3.500z" fill="#fdd544"/><circle cx="9.300" cy="4.300" r="1" fill="#fff"/><path d="M16.500 17l5.500 3-5.500 3" fill="none" stroke="#444" stroke-width="1.600"/>',
  cloud: '<path d="M5.500 20.500C-1 20-.5 12.500 4 12c-.5-4 3.500-5 5-4 1.500-5.500 10-4.500 9.500 3 6.500 0 6 9.500.5 9.500z" fill="#1e6fa0" stroke="#124f78" stroke-width="1.300"/>',
  coord: '<text x="12" y="5" text-anchor="middle" font-size="5" font-weight="bold" font-family="Liberation Sans, sans-serif" fill="#e33">Coord</text><path d="M8 7.500l2 .5h4l2-.5v5h1v3h-2v1h-2v-1h-2v1H9v-1H7v-3h1z" fill="#5fb61c"/><path d="M0 20h6M9 19.500h5M17 20h7" stroke="#e66" stroke-width="2" stroke-dasharray="1.200 .8"/><path d="M13 18l2 1.500-2 1.500" fill="none" stroke="#e44"/>',
  street: '<path d="M3 23c1-4 5-5 7-5l4 1 5-2-4 5-6 1-4 .5z" fill="#46b04a" stroke="#2a7a2e"/><circle cx="13" cy="3.500" r="3" fill="#f0b01e" stroke="#80540a"/><path d="M10 7h6l1 7-1.500 1-1 6h-3l-1-6L9 14z" fill="#f2a216" stroke="#80540a"/>',
  undo2: '<path d="M7 18.500C12 22 20 19 20 12 20 4 10 1 5.500 8" fill="none" stroke="#5f93dd" stroke-width="4.500"/><path d="M1 7.500l10.500 2.500-7.500 7z" fill="#6f9fe3"/>',
  tri: '<path d="M13 1l4 7 7 15H0z" fill="#9b8266"/><path d="M0 23L9 9l4 6-3 8z" fill="#8a8a86"/><path d="M12 2l5 6-2 9-7-3z" fill="#c98a3a"/><path d="M10 16l6-2 7 9H9z" fill="#6b2f16"/><path d="M13 2h6v6h-5z" fill="#3c76a9"/><path d="M17 5h6v6h-6z" fill="#f5cf45"/><path d="M3 20l4-4 3 4z" fill="#d8d0c0"/>',
  chmtree: '<rect width="24" height="24" fill="#fff"/><path d="M2.500 20V6M12.500 20V6" stroke="#f3a8a8" stroke-width="1.300"/><path d="M7.500 10v10" stroke="#2a7a12" stroke-width="1.600"/><circle cx="7.500" cy="6.500" r="5.200" fill="#1f8a12" stroke="#c33" stroke-width=".5"/><path d="M0 20c8-2 16-2 24 0v4H0z" fill="#6e2a0a"/><g font-size="6.500" font-weight="bold" font-family="Liberation Sans, sans-serif" fill="#111"><text x="13" y="6">C</text><text x="15.500" y="12">H</text><text x="18" y="18">M</text></g>',
  geo: '<rect width="24" height="24" fill="#fbabab"/><path d="M0 24V10L10 0h14v4H18L4 19v5z" fill="#b0b2ae"/><path d="M1 10L10 1l4 4-9 12-3-1z" fill="#ffff1a" stroke="#9a9a00" stroke-width=".6"/><path d="M5 18c0-6 7-13 13-13l-2 11-4 2z" fill="#ffab46" stroke="#b36d22" stroke-width=".7"/><path d="M4 24v-6h11l3-12 5-2" fill="none" stroke="#6f6f6f" stroke-width=".8"/>',
  // layer dock
  brush: '<path d="M2 10l7-3 6 6-5 6z" fill="#f0c23a"/><path d="M1 12l5 1 4 4-3 4z" fill="#e0502c"/><path d="M9 7l6 6 4-3-5-5z" fill="#c87a1a"/><path d="M14 9l8-6" stroke="#d9a441" stroke-width="3.500"/><path d="M3 10l5-2 3 3-5 2z" fill="#76b7e0"/>',
  group: '<path d="M8.500 3.500h10v12h-10zM5.500 6.500v12h10M2.500 9.500v12h10" fill="none" stroke="#7a7a7a" stroke-width="1.500"/><path d="M13 2v12" stroke="#333" stroke-width="2"/><rect x="14" y="14" width="9" height="9" rx="1" fill="#5a9a5c"/><path d="M18.500 15.500v6M15.500 18.500h6" stroke="#fff" stroke-width="1.500"/>',
  eye: '<path d="M1 12C6 4 17 4 22 12 17 19 6 19 1 12z" fill="#eee" stroke="#888" stroke-width="1.600"/><circle cx="11.500" cy="11.500" r="4.500" fill="#5b82b8"/><circle cx="11.500" cy="11.500" r="2" fill="#222"/><path d="M2 7c5-5 14-5 19 0" fill="none" stroke="#999" stroke-width="1.500"/><path d="M16 20h8l-4 4z" fill="#555"/>',
  funnel: '<path d="M1 2h22v3l-8 8v10h-6V13L1 5z" fill="#5e8fc6" stroke="#41699b"/><path d="M1 1h22v4H1z" fill="#f5d93a" stroke="#b99a1a"/>',
  eps: '<path d="M12 4.500C8 1.500 2.500 3 3.500 6.500 4 8.500 6 8.500 8 8.500 5 8.500 2.500 9.500 2.500 12c0 4 6 4.500 9.500 1.500" fill="none" stroke="#c0c0c0" stroke-width="2"/><path d="M11 13h12l-4 5v5h-4v-5z" fill="#e2e2e2" stroke="#c4c4c4"/>',
  expand: '<path d="M1 2h8M4 2v18h5M4 10h5" fill="none" stroke="#777" stroke-width="1.500"/><path d="M8 8h4v4H8zM8 17h4v4H8z" fill="#fff" stroke="#f08a1e" stroke-width="2"/><path d="M14 2h6v12h4l-7 8-7-8h4z" fill="#5e8fc6" stroke="#355c8c"/>',
  collapse: '<path d="M1 2h8M4 2v18h5M4 10h5" fill="none" stroke="#777" stroke-width="1.500"/><path d="M8 8h4v4H8zM8 17h4v4H8z" fill="#fff" stroke="#f08a1e" stroke-width="2"/><path d="M14 22h6V10h4l-7-8-7 8h4z" fill="#5e8fc6" stroke="#355c8c"/>',
  remove: '<rect x="2" y="2" width="17" height="17" fill="none" stroke="#777" stroke-width="1.600"/><rect x="13" y="14" width="11" height="9" rx="2" fill="#e8504a"/><path d="M15 18.500h7" stroke="#fff" stroke-width="2"/>'
};
const svg = (name, cls) => `<svg class="${cls}" viewBox="0 0 24 24" fill="none" aria-hidden="true">${icons[name]}</svg>`;
const handle = w => `<span class="${w} h-5 shrink-0 flex justify-end pr-[3px]"><svg class="w-[5px] h-5" viewBox="0 0 5 20" aria-hidden="true"><path d="M1 1v18M4 1v18" stroke="#b0b0b0" stroke-dasharray="1 2"/></svg></span>`;
const faded = new Set('pens pen1 saveedit blobnew vertex multi trash cut copy paste undo redo ruler moveblob rotblob simpl ring part fillring delring delpart reshape offset split1 split2 split3 merge align rotsym lab diag pinoff table abacus node dots action select form'.split(' '));
const tool = n => n === 'pan'
  ? `<span class="w-[33px] shrink-0 grid place-items-center"><button type="button" aria-label="pan" aria-pressed="true" class="w-8 h-[31px] grid place-items-center rounded-[3px] border border-[#a8a8a8] bg-[#dcdcdc]">${svg(n, 'w-6 h-6')}</button></span>`
  : `<button type="button" aria-label="${n}" class="w-[33px] h-8 shrink-0 grid place-items-center">${svg(n, faded.has(n) ? 'w-6 h-6 opacity-80' : 'w-6 h-6')}</button>`;
const drop = c => `<button type="button" aria-label="menu" class="w-3 h-8 shrink-0 grid place-items-center"><svg class="w-2 h-1" viewBox="0 0 8 4"><path d="M0 0h8L4 4z" fill="${c}"/></svg></button>`;
const build = (id, list) => document.getElementById(id).innerHTML = list.split(' ').map((t, i) =>
  t === '|' ? handle(i ? 'w-4' : 'w-3') : t === 'v' ? drop('#a0a0a0') : t === 'V' ? drop('#555') : t === '_' ? '<span class="w-[137px] shrink-0"></span>' : tool(t)).join('');
build('bar1', '| new open save saveas layout layoutmgr style | pan panto zin zout z11 zfull zsel zlayer zlast znext bk1 bk2 bk3 refresh | info action v select v form v desel table abacus gear sigma measure V annot text V | magnet node dots');
document.getElementById('bar1').insertAdjacentHTML('beforeend', '<input type="text" aria-label="Tolleranza" value="12" class="w-[90px] h-5 shrink-0 px-1 rounded-[3px] border border-[#ababab] bg-[#f2f2f2] text-[#8c8c8c]">');
build('bar2', '| addlayer geopkg shape feather chip | pens pen1 saveedit blobnew vertex v multi trash cut copy paste undo redo | ruler moveblob v rotblob simpl ring part fillring delring delpart reshape offset split1 split2 split3 merge align rotsym v | lab diag pin pinoff');
build('bar3', '| gball wadd wfind wbino | shield | scp | python cloud coord street undo2 V tri chmtree _ | geo');

const small = n => `<button type="button" aria-label="${n}" class="w-[25px] h-6 grid place-items-center">${svg(n, 'w-4 h-4')}</button>`;
document.getElementById('layerbar').innerHTML = ['brush', 'group', 'eye', 'funnel', 'eps'].map(small).join('') + drop('#b0b0b0') + ['expand', 'collapse', 'remove'].map(small).join('');

// ---- ticks, combo arrows and spin arrows ----
const tickSvg = '<svg class="pointer-events-none absolute inset-0 w-[14px] h-[14px]" viewBox="0 0 14 14" aria-hidden="true"><path d="M3 7l3 4.500 5-9" fill="none" stroke="#000" stroke-width="2"/></svg>';
document.querySelectorAll('.tick').forEach(e => e.insertAdjacentHTML('beforeend', tickSvg));
document.querySelectorAll('.combo').forEach(e => e.insertAdjacentHTML('beforeend', '<svg class="pointer-events-none absolute right-[7px] top-1/2 -mt-0.5 w-2 h-1" viewBox="0 0 8 4" aria-hidden="true"><path d="M0 0h8L4 4z" fill="currentColor" opacity=".7"/></svg>'));
document.querySelectorAll('.spin').forEach(e => e.innerHTML = '<svg class="w-full h-5" viewBox="0 0 13 20" aria-hidden="true"><path d="M3 8h7L6.500 4zM3 13h7l-3.500 4z" fill="currentColor"/></svg>');

// ---- layer tree ----
const rasters = [['D46521208_0101_CHM', '33.423'], ['D46521207_0101_CHM', '35.34'], ['D46521206_0101_CHM', '32.24'], ['D46521205_0101_CHM', '32.98'], ['D46521204_0101_CHM', '61.043']];
const box = id => `<span class="relative w-[14px] h-[14px] shrink-0"><input id="${id}" type="checkbox" checked class="appearance-none block w-[14px] h-[14px] border border-[#bdbdbd] bg-white">${tickSvg}</span>`;
const pix = (d, m, l) => `<svg class="w-[13px] h-[13px] ml-2 mr-px shrink-0" viewBox="0 0 13 13" aria-hidden="true"><path d="M4 0h5v13H4zM0 4h13v5H0z" fill="${l}"/><path d="M0 0h4v4H0zM9 0h4v4H9zM0 9h4v4H0zM5 5h3v3H5z" fill="${d}"/><path d="M4 4h2v2H4zM7 7h2v2H7zM9 4h4v2H9z" fill="${m}"/></svg>`;
let html = '';
rasters.forEach(([name, max], i) => {
  html += `<li><div class="flex items-center h-[18px] pl-[6px] ${i ? '' : 'bg-[#efefef]'}">
    <svg class="w-2 h-1 mr-[9px]" viewBox="0 0 8 4" aria-hidden="true"><path d="M0 0h8L4 4z" fill="#555"/></svg>${box('r' + i)}${i ? pix('#2b3a52', '#8fb0d8', '#b4cbe6') : pix('#2f5b96', '#6ea3de', '#8dbaf0')}
    <label for="r${i}" class="ml-[6px] font-['Noto_Sans',sans-serif] font-bold text-xs leading-[18px] ${i ? '' : 'underline'}">${name}</label></div>
    <div class="flex items-center h-[18px] pl-[43px] gap-[6px]"><span class="w-4 h-4 bg-black"></span>0</div>
    <div class="h-[18px] pl-[65px] leading-[18px]">${max}</div></li>`;
});
[['2008_2010_Lidar_TEST_Contratto_140_20190608_113047_sel...', 'bg-[#8b5a99] border-[#5f3d69]'], ['tile_dsm_dtm', 'bg-[#c43c39] border-[#7d2725]']].forEach(([name, c], i) => {
  html += `<li class="flex items-center h-[18px] pl-[23px]">${box('v' + i)}<span class="w-4 h-4 ml-[6px] shrink-0 border ${c}"></span><label for="v${i}" class="ml-[6px] font-['Open_Sans',sans-serif] font-bold text-xs leading-[18px] whitespace-nowrap">${name}</label></li>`;
});
document.getElementById('tree').innerHTML = html;

// ---- tile index lines (map coordinates start at the canvas corner) ----
let d = '';
for (let k = 0; k < 12; k++) { const x = 14 + k * 80.4; d += `M${x} 0L${x + 26} 671`; }
for (let k = -1; k < 7; k++) { const y = 53.5 + k * 116.7; d += `M0 ${y}L474 ${y - 18}L940 ${y - 36}`; }
d += 'M900 70.500h10.500v9M900 79.500h12.500v42H900M900 100.500h12.500M900 154.500h40M904 163.500h36M910.500 154v9M912.500 163v105M904 184.500h36M904 205.500h36M904 226.500h36M910.500 217v10M906 217.500h4.500M906 247.500h6.500M909 268.500h3.500M906 155l4 100M920 600l4 72';
document.getElementById('grid').innerHTML = `<path d="${d}"/>`;

// ---- canopy height raster: seeded noise shaded by a density field ----
const cv = document.getElementById('chm'), g = cv.getContext('2d');
let seed = 12345; const rnd = () => (seed = (seed * 1664525 + 1013904223) >>> 0) / 4294967296;
g.beginPath(); g.moveTo(2, 16); g.lineTo(405, 1); g.lineTo(410, 117); g.lineTo(6, 133); g.closePath(); g.fillStyle = '#000'; g.fill();
const img = g.getImageData(0, 0, 412, 136);
const lattice = Array.from({ length: 8000 }, rnd);
const noise = (x, y) => { // smooth value noise
  const xi = Math.floor(x), yi = Math.floor(y), a = x - xi, b = y - yi, at = (i, j) => lattice[(i + j * 131) % 8000];
  return (at(xi, yi) * (1 - a) + at(xi + 1, yi) * a) * (1 - b) + (at(xi, yi + 1) * (1 - a) + at(xi + 1, yi + 1) * a) * b;
};
const spot = (x, y, cx, cy, rx, ry) => Math.exp(-(((x - cx) / rx) ** 2 + ((y - cy) / ry) ** 2));
const lineAt = (v, c, w) => Math.exp(-(((v - c) / w) ** 2));
for (let y = 0; y < 136; y++) for (let x = 0; x < 412; x++) {
  const i = (y * 412 + x) * 4; if (img.data[i + 3] < 128) { img.data[i + 3] = 0; continue; }
  img.data[i + 3] = 255;
  const v = y - 16 + x * .037, tex = noise(x / 9 + 3, v / 9 + 5) + noise(x / 22 + 9, v / 22 + 2) - 1;
  const right = .58 + .1 * (x > 200) + .3 * tex;
  const left = .04 + .42 * Math.max(0, v - 35) / 80 + .12 * tex - .35 * spot(x, v, 55, 84, 30, 12);
  const m = Math.min(1, Math.max(0, (x - 76) / 14));
  let k = left * (1 - m) + right * m;
  k -= .55 * spot(x, v, 210, 76, 9, 10) + .5 * spot(x, v, 224, 94, 12, 9) + .3 * spot(x, v, 192, 62, 10, 6) + .35 * spot(x, v, 388, 70, 12, 6) + .6 * spot(x, v, 100, 0, 38, 8) + .3 * spot(x, v, 40, 0, 40, 20);
  if (x > 95 && x < 350) k -= .45 * lineAt(v, 88 - 6 * Math.sin(x / 32), 2) + .3 * lineAt(v, 103 + 5 * Math.sin(x / 40), 2.5);
  if (v < 70) k -= .4 * lineAt(x, 187 + 10 * Math.cos(v / 14), 2.5);
  k += .25 * spot(x, v, 284, 28, 14, 14) + .25 * spot(x, v, 130, 108, 30, 9) + .2 * spot(x, v, 375, 98, 16, 12) + .2 * spot(x, v, 200, 115, 40, 6);
  const r = rnd(), c = Math.max(0, k) * 255 * (r > .38 ? (r - .38) * 1.6 : 0);
  img.data[i] = img.data[i + 1] = img.data[i + 2] = Math.min(255, c);
}
g.putImageData(img, 0, 0);
g.fillStyle = '#eee'; g.fillRect(65, 21, 7, 2); g.fillRect(23, 53, 3, 2); g.fillRect(27, 54, 3, 1); g.fillRect(10, 56, 3, 1);
</script>
</body>
</html>
